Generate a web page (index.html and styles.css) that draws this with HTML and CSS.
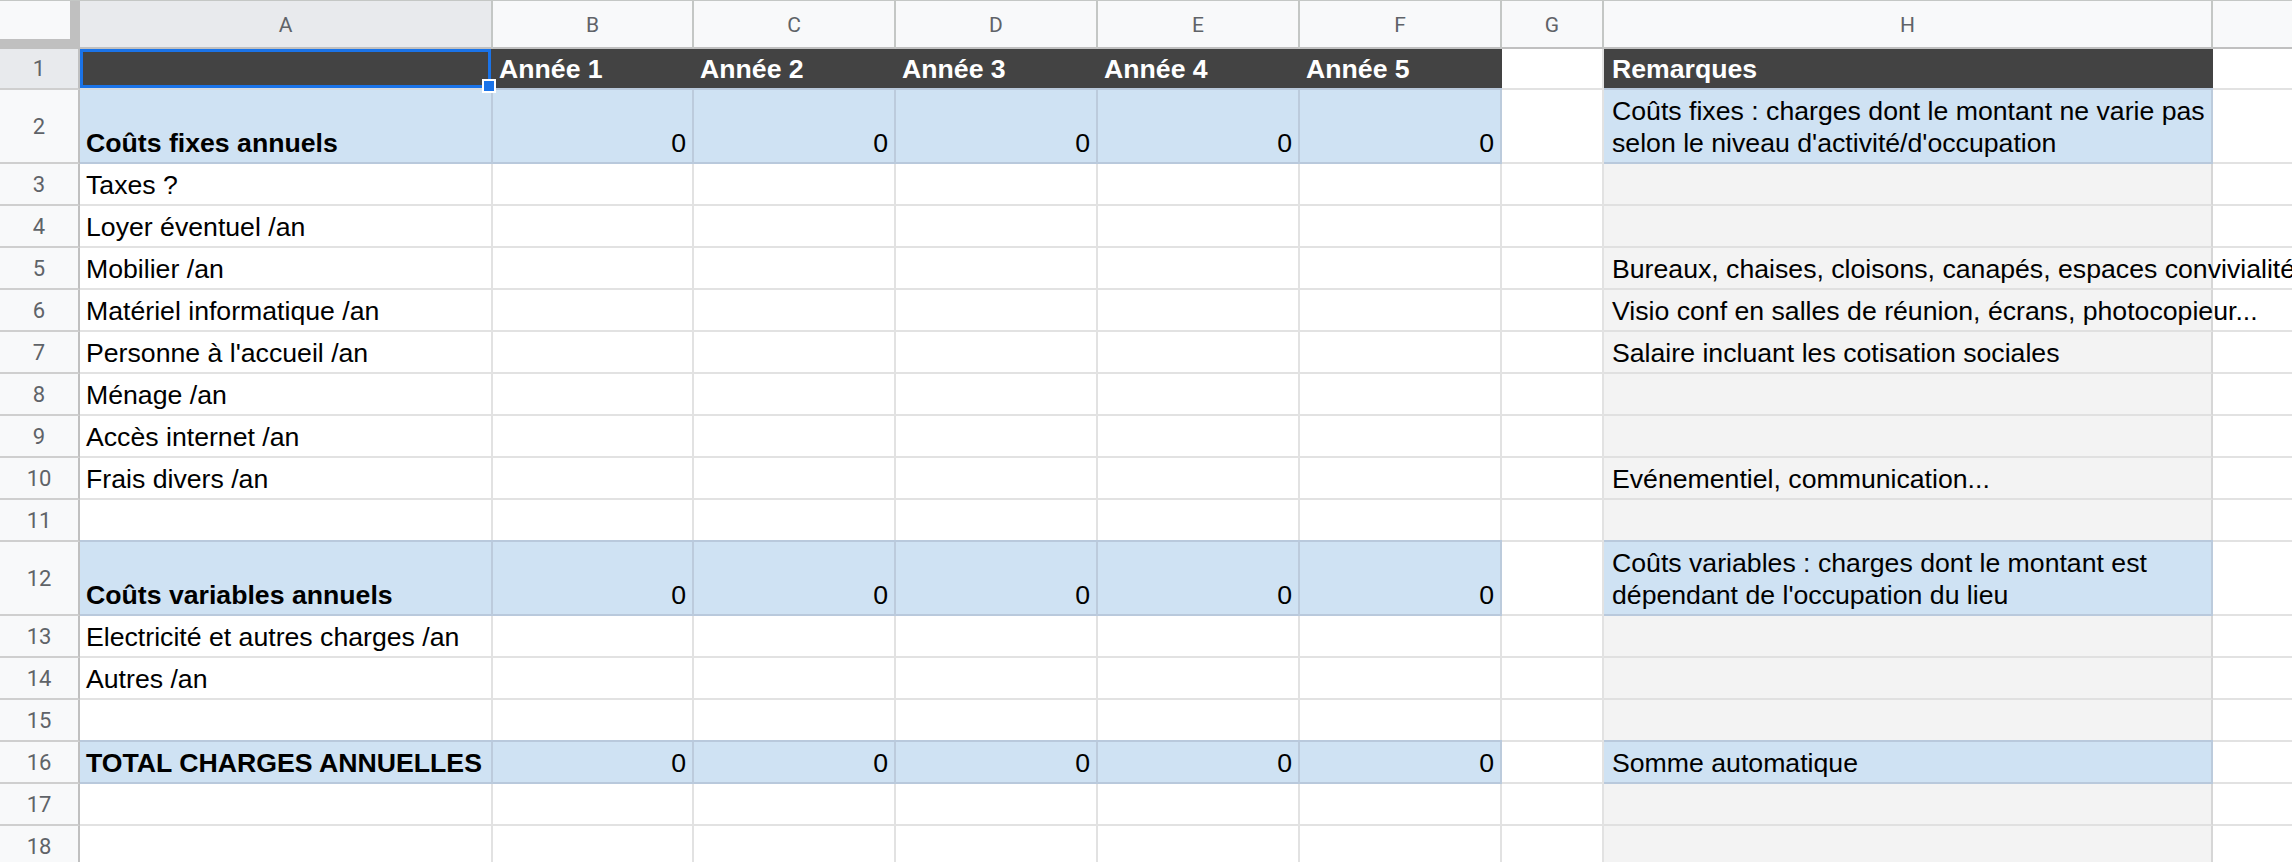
FILE: index.html
```html
<!DOCTYPE html>
<html lang="fr">
<head>
<meta charset="UTF-8" />
<title>Charges annuelles</title>
<link rel="stylesheet" href="styles.css">
</head>
<body>

<div class="sheet">

  <!-- en-têtes de colonnes -->
  <div class="corner"><div class="corner-box"></div></div>
  <div class="ch sel">A</div>
  <div class="ch">B</div>
  <div class="ch">C</div>
  <div class="ch">D</div>
  <div class="ch">E</div>
  <div class="ch">F</div>
  <div class="ch">G</div>
  <div class="ch">H</div>
  <div class="ch last"></div>

  <!-- 1 -->
  <div class="rh sel">1</div>
  <div class="c dark selected"><div class="selection"><div class="handle"></div></div></div>
  <div class="c dark">Année 1</div>
  <div class="c dark">Année 2</div>
  <div class="c dark">Année 3</div>
  <div class="c dark">Année 4</div>
  <div class="c dark">Année 5</div>
  <div class="c"></div>
  <div class="c dark rem">Remarques</div>
  <div class="c end"></div>

  <!-- 2 -->
  <div class="rh">2</div>
  <div class="c blue bold">Coûts fixes annuels</div>
  <div class="c blue num">0</div>
  <div class="c blue num">0</div>
  <div class="c blue num">0</div>
  <div class="c blue num">0</div>
  <div class="c blue num">0</div>
  <div class="c"></div>
  <div class="c blue rem wrap">Coûts fixes : charges dont le montant ne varie pas selon le niveau d'activité/d'occupation</div>
  <div class="c end"></div>

  <!-- 3 -->
  <div class="rh">3</div>
  <div class="c">Taxes ?</div>
  <div class="c"></div><div class="c"></div><div class="c"></div><div class="c"></div><div class="c"></div>
  <div class="c"></div>
  <div class="c note rem"></div>
  <div class="c end"></div>

  <!-- 4 -->
  <div class="rh">4</div>
  <div class="c">Loyer éventuel /an</div>
  <div class="c"></div><div class="c"></div><div class="c"></div><div class="c"></div><div class="c"></div>
  <div class="c"></div>
  <div class="c note rem"></div>
  <div class="c end"></div>

  <!-- 5 -->
  <div class="rh">5</div>
  <div class="c">Mobilier /an</div>
  <div class="c"></div><div class="c"></div><div class="c"></div><div class="c"></div><div class="c"></div>
  <div class="c"></div>
  <div class="c note rem">Bureaux, chaises, cloisons, canapés, espaces convivialité</div>
  <div class="c end"></div>

  <!-- 6 -->
  <div class="rh">6</div>
  <div class="c">Matériel informatique /an</div>
  <div class="c"></div><div class="c"></div><div class="c"></div><div class="c"></div><div class="c"></div>
  <div class="c"></div>
  <div class="c note rem">Visio conf en salles de réunion, écrans, photocopieur...</div>
  <div class="c end"></div>

  <!-- 7 -->
  <div class="rh">7</div>
  <div class="c">Personne à l'accueil /an</div>
  <div class="c"></div><div class="c"></div><div class="c"></div><div class="c"></div><div class="c"></div>
  <div class="c"></div>
  <div class="c note rem">Salaire incluant les cotisation sociales</div>
  <div class="c end"></div>

  <!-- 8 -->
  <div class="rh">8</div>
  <div class="c">Ménage /an</div>
  <div class="c"></div><div class="c"></div><div class="c"></div><div class="c"></div><div class="c"></div>
  <div class="c"></div>
  <div class="c note rem"></div>
  <div class="c end"></div>

  <!-- 9 -->
  <div class="rh">9</div>
  <div class="c">Accès internet /an</div>
  <div class="c"></div><div class="c"></div><div class="c"></div><div class="c"></div><div class="c"></div>
  <div class="c"></div>
  <div class="c note rem"></div>
  <div class="c end"></div>

  <!-- 10 -->
  <div class="rh">10</div>
  <div class="c">Frais divers /an</div>
  <div class="c"></div><div class="c"></div><div class="c"></div><div class="c"></div><div class="c"></div>
  <div class="c"></div>
  <div class="c note rem">Evénementiel, communication...</div>
  <div class="c end"></div>

  <!-- 11 -->
  <div class="rh">11</div>
  <div class="c"></div>
  <div class="c"></div><div class="c"></div><div class="c"></div><div class="c"></div><div class="c"></div>
  <div class="c"></div>
  <div class="c note rem"></div>
  <div class="c end"></div>

  <!-- 12 -->
  <div class="rh">12</div>
  <div class="c blue bold">Coûts variables annuels</div>
  <div class="c blue num">0</div>
  <div class="c blue num">0</div>
  <div class="c blue num">0</div>
  <div class="c blue num">0</div>
  <div class="c blue num">0</div>
  <div class="c"></div>
  <div class="c blue rem wrap">Coûts variables : charges dont le montant est dépendant de l'occupation du lieu</div>
  <div class="c end"></div>

  <!-- 13 -->
  <div class="rh">13</div>
  <div class="c">Electricité et autres charges /an</div>
  <div class="c"></div><div class="c"></div><div class="c"></div><div class="c"></div><div class="c"></div>
  <div class="c"></div>
  <div class="c note rem"></div>
  <div class="c end"></div>

  <!-- 14 -->
  <div class="rh">14</div>
  <div class="c">Autres /an</div>
  <div class="c"></div><div class="c"></div><div class="c"></div><div class="c"></div><div class="c"></div>
  <div class="c"></div>
  <div class="c note rem"></div>
  <div class="c end"></div>

  <!-- 15 -->
  <div class="rh">15</div>
  <div class="c"></div>
  <div class="c"></div><div class="c"></div><div class="c"></div><div class="c"></div><div class="c"></div>
  <div class="c"></div>
  <div class="c note rem"></div>
  <div class="c end"></div>

  <!-- 16 -->
  <div class="rh">16</div>
  <div class="c blue bold">TOTAL CHARGES ANNUELLES</div>
  <div class="c blue num">0</div>
  <div class="c blue num">0</div>
  <div class="c blue num">0</div>
  <div class="c blue num">0</div>
  <div class="c blue num">0</div>
  <div class="c"></div>
  <div class="c blue rem">Somme automatique</div>
  <div class="c end"></div>

  <!-- 17 -->
  <div class="rh">17</div>
  <div class="c"></div>
  <div class="c"></div><div class="c"></div><div class="c"></div><div class="c"></div><div class="c"></div>
  <div class="c"></div>
  <div class="c note rem"></div>
  <div class="c end"></div>

  <!-- 18 -->
  <div class="rh">18</div>
  <div class="c"></div>
  <div class="c"></div><div class="c"></div><div class="c"></div><div class="c"></div><div class="c"></div>
  <div class="c"></div>
  <div class="c note rem"></div>
  <div class="c end"></div>

</div>

</body>
</html>
```

FILE: styles.css
```css
* {
  box-sizing: border-box;
}
body, html {
  margin: 0; padding: 0;
  background: #fff;
  overflow: hidden;
}
.sheet {
  display: grid;
  grid-template-columns: 80px 413px 201px 202px 202px 202px 202px 102px 609px 1fr;
  grid-template-rows: 49px 41px 74px repeat(9, 42px) 74px repeat(6, 42px);
  font-family: 'Liberation Sans', Arial, sans-serif;
  font-size: 26.67px;
  color: #000;
}

/* en-têtes */
.corner {
  background: #c0c0c0;
  border-top: 1px solid #c4c7c5;
  border-bottom: 2px solid #c0c0c0;
}
.corner-box {
  width: 70px;
  height: 38px;
  background: #f8f9fa;
}
.ch {
  display: flex;
  justify-content: center;
  align-items: center;
  background: #f8f9fa;
  border-top: 1px solid #c4c7c5;
  border-right: 2px solid #c4c7c5;
  border-bottom: 2px solid #c0c0c0;
  font-family: Roboto, 'Liberation Sans', sans-serif;
  font-size: 21px;
  color: #5f6368;
  padding-top: 2px;
}
.ch.last {
  border-right: none;
}
.rh {
  display: flex;
  justify-content: center;
  align-items: center;
  background: #f8f9fa;
  border-right: 2px solid #c0c0c0;
  border-bottom: 2px solid #cfcfcf;
  font-family: Roboto, 'Liberation Sans', sans-serif;
  font-size: 22px;
  color: #5f6368;
}
.sel {
  background: #e8eaed;
}

/* cellules */
.c {
  display: flex;
  align-items: flex-end;
  min-width: 0;
  padding: 0 4px 3px 6px;
  line-height: 32px;
  white-space: nowrap;
  border-right: 2px solid #e2e2e2;
  border-bottom: 2px solid #e2e2e2;
}
.c.end {
  border-right: none;
}
.num {
  justify-content: flex-end;
  padding-right: 6px;
}
.rem {
  padding-left: 8px;
  padding-right: 3px;
}
.bold {
  font-weight: bold;
}
.wrap {
  white-space: normal;
}
.dark {
  background: #434343;
  color: #fff;
  font-weight: bold;
  border-right-color: #434343;
  border-bottom-color: #d4dbe3;
}
.blue {
  background: #cfe2f3;
  border-right-color: #bccbdc;
  border-bottom-color: #b9c9dc;
  box-shadow: 0 -2px 0 #b9c9dc;
}
.note {
  background: #f3f3f3;
  border-right-color: #d6d6d6;
  border-bottom-color: #e0e0e0;
}

/* sélection A1 */
.selected {
  position: relative;
}
.selection {
  position: absolute;
  top: 0; left: 0; right: 0; bottom: 0;
  border: 3px solid #1a73e8;
  z-index: 2;
}
.handle {
  position: absolute;
  right: -8px;
  bottom: -8px;
  width: 14px;
  height: 14px;
  background: #1a73e8;
  border: 2px solid #fff;
}
```
